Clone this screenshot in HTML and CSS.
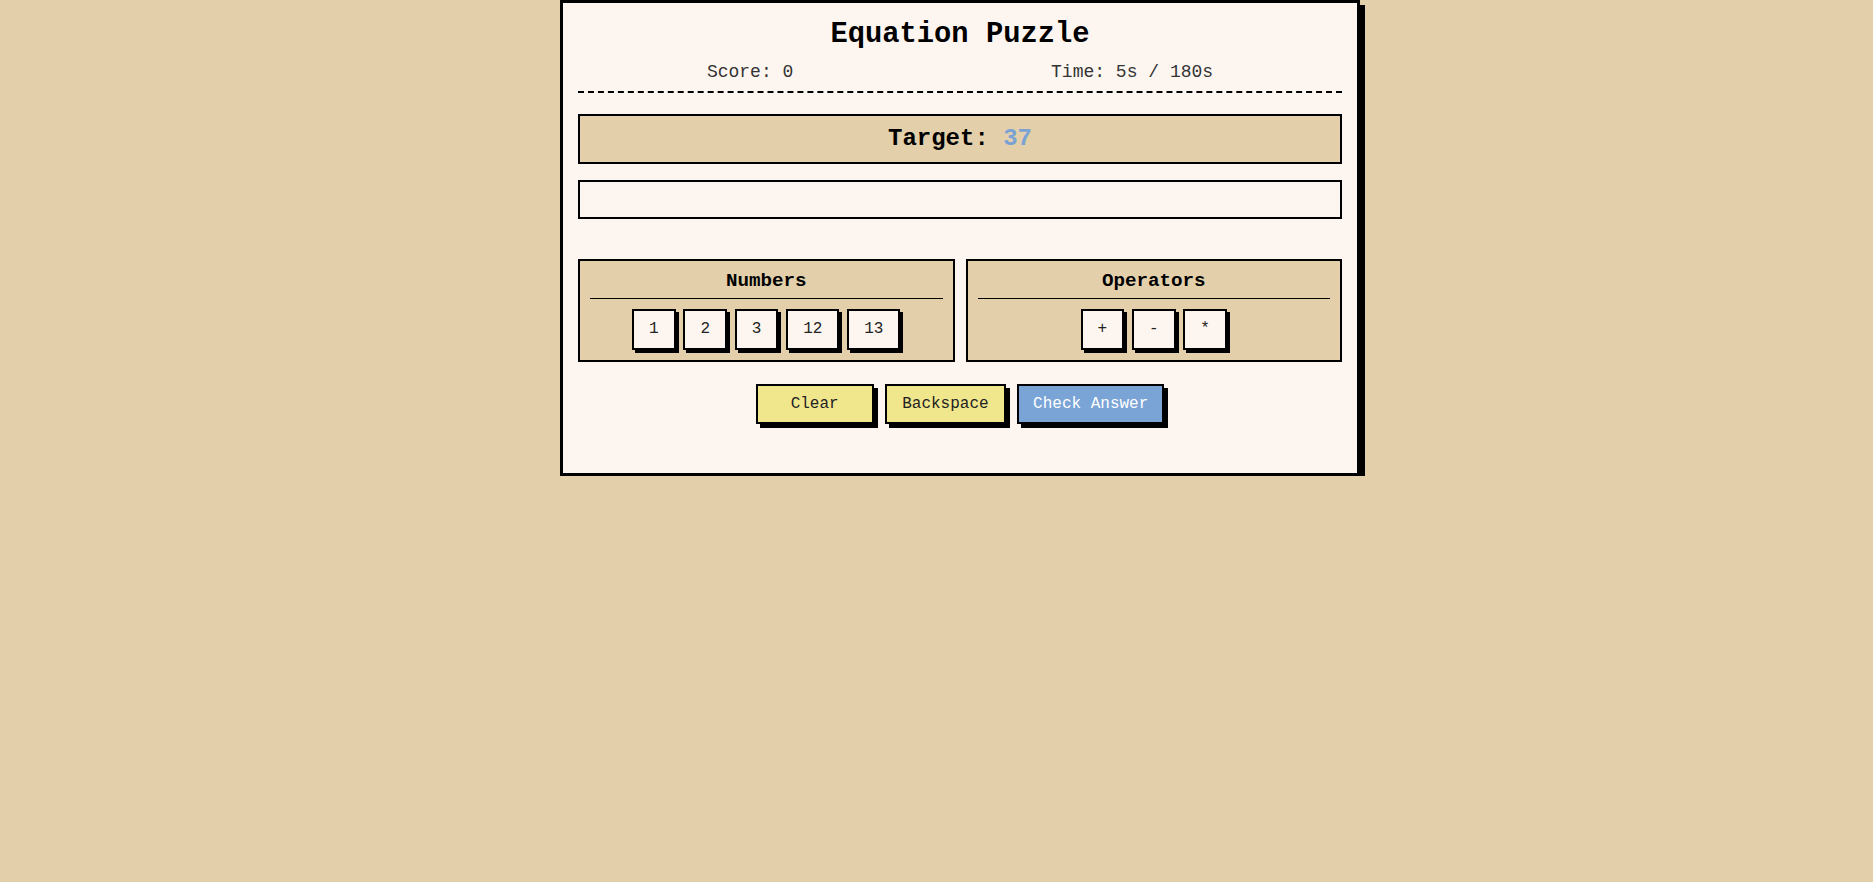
FILE: index.html
```html
<!DOCTYPE html>
<html lang="en">
<head>
<meta charset="utf-8">
<title>Equation Puzzle</title>
<link rel="stylesheet" href="styles.css">
</head>
<body>
<div class="game">
  <header class="game-header">
    <h1 class="title">Equation Puzzle</h1>
    <div class="stats">
      <span class="stat">Score: 0</span>
      <span class="stat">Time: 5s / 180s</span>
    </div>
  </header>
  <div class="target">Target: <span class="target-num">37</span></div>
  <div class="equation"></div>
  <div class="panels">
    <section class="panel">
      <h3 class="panel-title">Numbers</h3>
      <div class="tiles">
        <button class="tile">1</button>
        <button class="tile">2</button>
        <button class="tile">3</button>
        <button class="tile">12</button>
        <button class="tile">13</button>
      </div>
    </section>
    <section class="panel">
      <h3 class="panel-title">Operators</h3>
      <div class="tiles">
        <button class="tile">+</button>
        <button class="tile">-</button>
        <button class="tile">*</button>
      </div>
    </section>
  </div>
  <div class="actions">
    <button class="action action-clear">Clear</button>
    <button class="action">Backspace</button>
    <button class="action action-check">Check Answer</button>
  </div>
</div>
</body>
</html>
```
FILE: styles.css
```css
* { box-sizing: border-box; }

body {
  margin: 0;
  background: #e3d0ab;
  font-family: "Liberation Mono", "Courier New", monospace;
  color: #000;
}

.game {
  width: 800px;
  margin: 0 0 0 560px;
  background: #fdf6f0;
  border: 3px solid #000;
  box-shadow: 5px 5px 0 #000;
  padding: 16px 15px 15px;
}

.game-header {
  text-align: center;
  padding-bottom: 9px;
  border-bottom: 2px dashed #000;
  margin-bottom: 21px;
}

.title {
  margin: 0 0 10px;
  font-size: 28.8px;
  font-weight: bold;
  line-height: 32.6px;
}

.stats {
  display: flex;
  justify-content: space-around;
  font-size: 18px;
  line-height: 20.4px;
  color: #333;
}

.target {
  background: #e3d0ab;
  border: 2px solid #000;
  padding: 10px;
  text-align: center;
  font-size: 24px;
  font-weight: bold;
  line-height: 26px;
  margin-bottom: 16px;
}

.target-num { color: #7aa3d4; }

.equation {
  height: 39px;
  border: 2px solid #000;
  background: #fdf6f0;
  margin-bottom: 40px;
}

.panels {
  display: flex;
  gap: 11px;
}

.panel {
  flex: 1;
  background: #e3d0ab;
  border: 2px solid #000;
  padding: 10px;
}

.panel-title {
  margin: 0 0 10.5px;
  padding-bottom: 5px;
  border-bottom: 1px solid #000;
  text-align: center;
  font-size: 19.2px;
  line-height: 21.7px;
  font-weight: bold;
}

.tiles {
  display: flex;
  justify-content: center;
  gap: 7.8px;
}

.tile {
  font-family: inherit;
  font-size: 16px;
  line-height: 17px;
  padding: 10px 15px;
  background: #fdf6f0;
  color: #222;
  border: 2px solid #000;
  border-radius: 0;
  box-shadow: 3px 3px 0 #000;
}

.actions {
  display: flex;
  justify-content: center;
  gap: 11.5px;
  margin-top: 21.5px;
  margin-bottom: 34px;
}

.action {
  font-family: inherit;
  font-size: 16px;
  line-height: 16px;
  padding: 10px 15px;
  background: #f0e68c;
  color: #222;
  border: 2px solid #000;
  border-radius: 0;
  box-shadow: 4px 4px 0 #000;
}

.action-clear { min-width: 118px; }

.action-check {
  background: #7aa3d6;
  color: #fff;
  padding: 10px 14px;
}
```
